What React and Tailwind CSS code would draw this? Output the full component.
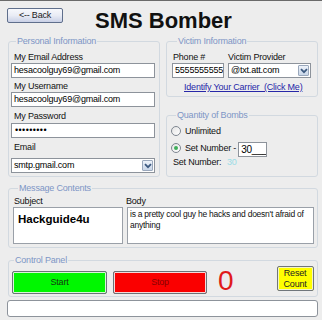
import React from "react";

const F = { fontFamily: '"Liberation Sans", Arial, sans-serif' };

function Chevron() {
  return (
    <svg width="8" height="6" viewBox="0 0 8 6">
      <path d="M1 1.2 L4 4.2 L7 1.2" fill="none" stroke="#3d5a80" strokeWidth="1.8" />
    </svg>
  );
}

function Combo({ value, w }) {
  return (
    <div className={`flex h-[15px] ${w} items-stretch border border-[#8d939b] bg-white`}>
      <div className="flex-1 overflow-hidden whitespace-nowrap pl-[2px] text-[9px] leading-[13px] text-black">{value}</div>
      <div className="m-[1px] flex w-[11px] items-center justify-center rounded-[1px] border border-[#9aa8bc] bg-gradient-to-b from-[#eef3fa] to-[#c9d6e8]">
        <Chevron />
      </div>
    </div>
  );
}

function Input({ value, w, cls = "" }) {
  return (
    <div className={`h-[15px] ${w} overflow-hidden whitespace-nowrap border border-[#8d939b] bg-white pl-[2px] text-[9px] leading-[13px] text-black ${cls}`}>
      {value}
    </div>
  );
}

function Group({ title, cls, children }) {
  return (
    <fieldset className={`min-w-0 rounded-[3px] border border-[#d2d9e0] ${cls}`}>
      <legend className="ml-[5px] px-[1px] text-[9px] leading-[11px] text-[#7d96c6]">{title}</legend>
      {children}
    </fieldset>
  );
}

function Radio({ checked }) {
  return (
    <div className="flex h-[10px] w-[10px] items-center justify-center rounded-full border border-[#7e8690] bg-gradient-to-br from-[#e4e4e4] to-white">
      {checked && <div className="h-[4px] w-[4px] rounded-full bg-[#3fae5a]" />}
    </div>
  );
}

export default function App() {
  return (
    <div style={F} className="h-[320px] w-[322px] overflow-hidden border-t border-[#6a6a6a] bg-[#ededed] pl-[7px] text-[9px] tracking-[-0.2px] text-[#111]">
      {/* header */}
      <div className="flex h-[35px] items-start pt-[7px]">
        <div className="flex h-[15px] w-[56px] items-center justify-center rounded-[2px] border border-[#5f6f8c] bg-gradient-to-b from-[#f7f8fc] via-[#e9ecf5] to-[#c9d0e6] text-[9px] leading-none text-[#222]">
          &lt;-- Back
        </div>
        <div className="ml-[32px] mt-[2px] text-[22px] font-bold leading-[22px] tracking-normal text-[#111]">
          SMS Bomber
        </div>
      </div>

      {/* main row */}
      <div className="flex">
        <Group title="Personal Information" cls="ml-[1px] h-[141px] w-[152px] pl-[2px]">
          <div className="mt-[4px] pl-[3px] leading-[12px]">My Email Address</div>
          <Input value="hesacoolguy69@gmail.com" w="w-[144px]" />
          <div className="mt-[2px] pl-[3px] leading-[12px]">My Username</div>
          <Input value="hesacoolguy69@gmail.com" w="w-[144px]" />
          <div className="mt-[3px] pl-[3px] leading-[12px]">My Password</div>
          <Input value="•••••••••" w="w-[144px] mt-[1px]" cls="text-[5px] leading-[11px] tracking-[0.4px] pl-[3px]" />
          <div className="mt-[3px] pl-[3px] leading-[12px]">Email</div>
          <div className="mt-[5px]">
            <Combo value="smtp.gmail.com" w="w-[144px]" />
          </div>
        </Group>

        <div className="ml-[6px] flex w-[152px] flex-col">
          <Group title="Victim Information" cls="h-[61px] w-[152px] pl-[5px]">
            <div className="mt-[4px] flex leading-[12px]">
              <div className="w-[56px] pl-[1px]">Phone #</div>
              <div>Victim Provider</div>
            </div>
            <div className="flex gap-[4px]">
              <Input value="5555555555" w="w-[52px]" cls="pl-[1px]" />
              <Combo value="@txt.att.com" w="w-[83px]" />
            </div>
            <div className="mt-[3px] whitespace-nowrap pl-[12px] leading-[12px] text-[#2727a8] underline">
              Identify Your Carrier&nbsp; (Click Me)
            </div>
          </Group>

          <Group title="Quantity of Bombs" cls="mt-[13px] h-[67px] w-[152px] pl-[4px]">
            <div className="mt-[4px] flex h-[12px] items-center">
              <Radio />
              <div className="ml-[4px] leading-[12px]">Unlimited</div>
            </div>
            <div className="mt-[5px] flex h-[14px] items-start">
              <div className="mt-[1px]">
                <Radio checked />
              </div>
              <div className="ml-[4px] leading-[12px]">Set Number -</div>
              <Input value="30___" w="w-[29px] ml-[2px] h-[14px]" cls="leading-[12px] text-[10px]" />
            </div>
            <div className="flex leading-[12px]">
              <div className="w-[56px] whitespace-nowrap pl-[2px]">Set Number:</div>
              <div className="text-[#9adce6]">30</div>
            </div>
          </Group>
        </div>
      </div>

      {/* message contents */}
      <Group title="Message Contents" cls="ml-[1px] mt-[6px] h-[65px] w-[310px] pl-[4px]">
        <div className="mt-[1px] flex leading-[12px]">
          <div className="w-[113px] pl-[1px]">Subject</div>
          <div>Body</div>
        </div>
        <div className="flex gap-[4px]">
          <div className="h-[37px] w-[110px] border border-[#9aa0a8] bg-white pl-[4px] pt-[4px] text-[11.5px] font-bold leading-[14px] tracking-normal text-black">
            Hackguide4u
          </div>
          <div className="h-[37px] w-[187px] border border-[#9aa0a8] bg-white pl-[2px] pr-[1px] pt-[1px] text-[8.5px] leading-[11px] tracking-[-0.25px] text-[#111]">
            is a pretty cool guy he hacks and doesn't afraid of anything
          </div>
        </div>
      </Group>

      {/* control panel */}
      <Group title="Control Panel" cls="ml-[1px] mt-[7px] flex h-[42px] w-[310px] pr-[4px]">
        <div className="flex items-start">
          <div className="ml-[3px] mt-[5px] flex h-[23px] w-[95px] items-center justify-center rounded-[2px] border border-[#6b7378] bg-[#00f700] text-[9px] text-[#123812] shadow-[inset_0_0_0_1px_#d8f5d8]">
            Start
          </div>
          <div className="ml-[6px] mt-[5px] flex h-[23px] w-[94px] items-center justify-center rounded-[2px] border border-[#6b7378] bg-[#fa0000] text-[9px] text-[#8a0000] shadow-[inset_0_0_0_1px_#f5d8d8]">
            Stop
          </div>
          <div className="ml-[11px] mt-[1px] text-[28px] leading-[28px] tracking-normal text-[#e01b1b]">
            0
          </div>
          <div className="ml-[43px] flex h-[25px] w-[37px] flex-col items-center justify-center rounded-[2px] border border-[#70767c] bg-[#ffff00] text-center text-[9px] leading-[10.5px] text-[#222] shadow-[inset_0_0_0_1px_#f4f4c8]">
            <span>Reset</span>
            <span>Count</span>
          </div>
        </div>
      </Group>

      {/* status box */}
      <div className="mt-[3px] h-[17px] w-[311px] rounded-[3px] border border-[#8d939b] bg-white" />
    </div>
  );
}
